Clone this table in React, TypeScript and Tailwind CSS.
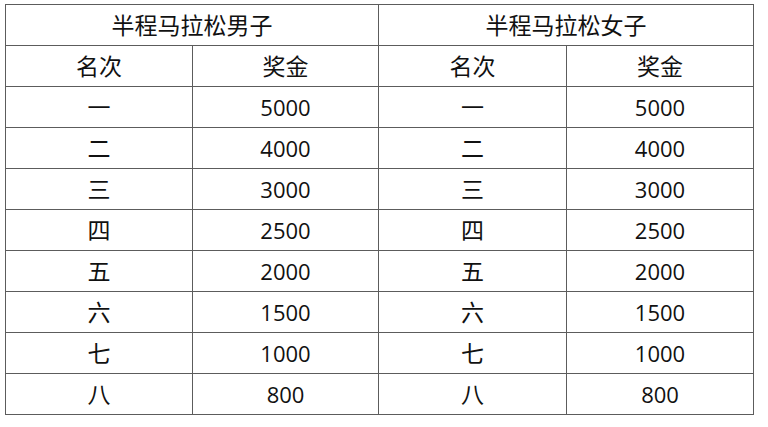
const rows: [string, string][] = [
  ["一", "5000"],
  ["二", "4000"],
  ["三", "3000"],
  ["四", "2500"],
  ["五", "2000"],
  ["六", "1500"],
  ["七", "1000"],
  ["八", "800"],
];

const cell = "border border-[#5c5c5c] h-[41px] p-0 text-center align-middle font-normal";
// CJK glyphs in the reference run a touch larger than the digits
const cjk = `${cell} text-[23px]`;

export default function App() {
  return (
    <div className="w-[768px] h-[427px] bg-white pl-[5px] pt-[4px] text-[#111] text-[22px] leading-none font-['Open_Sans','Noto_Sans_CJK_SC',sans-serif]">
      <table className="border-collapse table-fixed w-[748px]">
        <colgroup>
          <col className="w-[187px]" />
          <col className="w-[186px]" />
          <col className="w-[188px]" />
          <col className="w-[187px]" />
        </colgroup>
        <thead>
          <tr>
            <th colSpan={2} className={cjk}>半程马拉松男子</th>
            <th colSpan={2} className={cjk}>半程马拉松女子</th>
          </tr>
          <tr>
            <th className={cjk}>名次</th>
            <th className={cjk}>奖金</th>
            <th className={cjk}>名次</th>
            <th className={cjk}>奖金</th>
          </tr>
        </thead>
        <tbody>
          {rows.map(([rank, prize]) => (
            <tr key={rank}>
              <td className={cjk}>{rank}</td>
              <td className={cell}>{prize}</td>
              <td className={cjk}>{rank}</td>
              <td className={cell}>{prize}</td>
            </tr>
          ))}
        </tbody>
      </table>
    </div>
  );
}
